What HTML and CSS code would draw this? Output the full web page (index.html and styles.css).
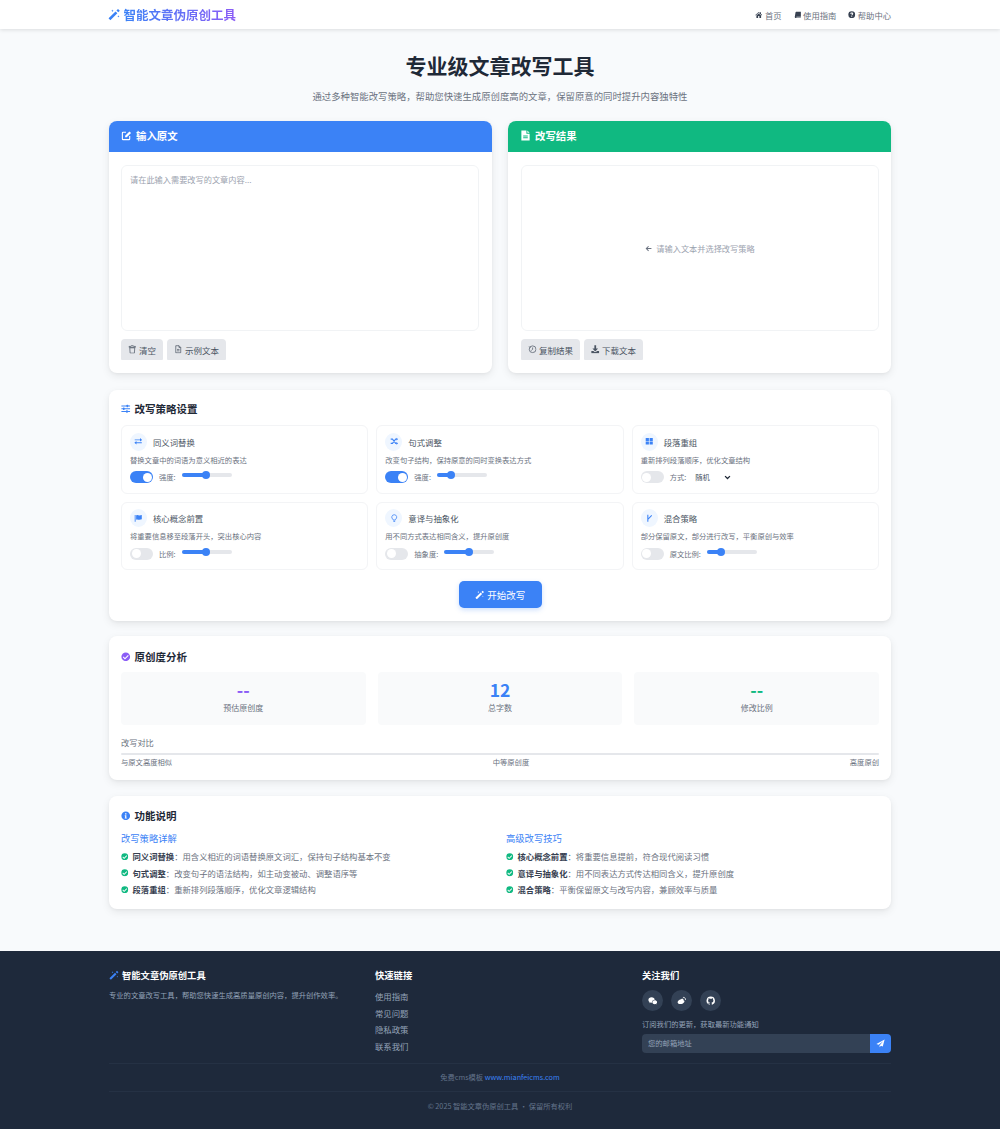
FILE: index.html
```html
<!DOCTYPE html>
<html lang="zh-CN">
<head>
<meta charset="utf-8">
<title>智能文章伪原创工具</title>
<link rel="stylesheet" href="styles.css">
</head>
<body>
<svg class="defs" width="0" height="0" aria-hidden="true">
  <symbol id="i-wand" viewBox="0 0 24 24"><path d="M1 19.500 14.500 6.500 18 10 4.500 23.500zM16.200 4.800l3-3 3.500 3.500-3 3zM8.500 3l.7 1.600 1.600.7-1.600.7-.7 1.600-.7-1.600-1.600-.7 1.600-.7zM20 14l.6 1.500 1.500.6-1.500.6-.6 1.500-.6-1.500-1.500-.6 1.500-.6z" fill="currentColor"/></symbol>
  <symbol id="i-home" viewBox="0 0 24 24"><path d="M12 3 1 12.500l1.300 1.500L12 5.700l9.700 8.300 1.300-1.500-4-3.400V4h-3v2.600zM4.500 14.300V22h5.500v-6h4v6h5.500v-7.700L12 8z" fill="currentColor"/></symbol>
  <symbol id="i-book" viewBox="0 0 24 24"><path d="M7 2h15v16H8a2 2 0 0 0 0 3h14v1.500H6A4 4 0 0 1 2.500 18L5 4a2.500 2.500 0 0 1 2-2z" fill="currentColor"/></symbol>
  <symbol id="i-help" viewBox="0 0 24 24"><path fill-rule="evenodd" d="M12 1a11 11 0 1 1 0 22 11 11 0 0 1 0-22zm-1.500 15.500v3h3v-3zM12 5c-2.800 0-4.500 1.600-4.700 4l2.700.5c.1-1.100.8-1.900 2-1.900 1.100 0 1.800.6 1.800 1.500 0 1.800-3.300 2-3.300 5.400h2.900c0-2.300 3.400-2.500 3.400-5.600C16.800 6.500 14.800 5 12 5z" fill="currentColor"/></symbol>
  <symbol id="i-edit" viewBox="0 0 24 24"><path d="M11 5H4.500A1.500 1.500 0 0 0 3 6.500v13A1.500 1.500 0 0 0 4.500 21h13a1.500 1.500 0 0 0 1.500-1.500V13" fill="none" stroke="currentColor" stroke-width="2.400"/><path d="M9 12.500 18.500 3 22 6.500 12.500 16H9z" fill="currentColor"/></symbol>
  <symbol id="i-file" viewBox="0 0 24 24"><path fill-rule="evenodd" d="M3 1h11v7h7v15H3zM16 1l5 5h-5zM7 12v2h10v-2zm0 4v2h10v-2z" fill="currentColor"/></symbol>
  <symbol id="i-file-o" viewBox="0 0 24 24"><path d="M14 2H5v20h14V7zM14 2v5h5M8.500 12.500h7M8.500 16.500h7" fill="none" stroke="currentColor" stroke-width="2"/></symbol>
  <symbol id="i-trash" viewBox="0 0 24 24"><path d="M9 2h6l1 2h5v2.500H3V4h5zM5 8h14l-1 15H6z" fill="none" stroke="currentColor" stroke-width="2"/></symbol>
  <symbol id="i-copy" viewBox="0 0 24 24"><circle cx="13" cy="12" r="9.500" fill="none" stroke="currentColor" stroke-width="2"/><path d="M7 8 3 4M13 7v5l-4 4" fill="none" stroke="currentColor" stroke-width="2"/></symbol>
  <symbol id="i-download" viewBox="0 0 24 24"><path d="M9.500 1h5v9H20l-8 8-8-8h5.500zM1 17h6l3 3h4l3-3h6v6H1z" fill="currentColor"/></symbol>
  <symbol id="i-arrow" viewBox="0 0 24 24"><path d="M11 3 2 12l9 9 2.500-2.500L8.500 14H22v-4H8.500l5-4.500z" fill="currentColor"/></symbol>
  <symbol id="i-sliders" viewBox="0 0 24 24"><path d="M1 5h22M1 12h22M1 19h22" stroke="currentColor" stroke-width="2.600"/><rect x="14" y="2" width="4" height="6" rx="1" fill="currentColor"/><rect x="5" y="9" width="4" height="6" rx="1" fill="currentColor"/><rect x="13" y="16" width="4" height="6" rx="1" fill="currentColor"/></symbol>
  <symbol id="i-exchange" viewBox="0 0 24 24"><path d="M2 7h15V3l6 5.500L17 13V9.500H2zM22 14.500H7V11l-6 5.500L7 21v-3.500h15z" fill="currentColor"/></symbol>
  <symbol id="i-random" viewBox="0 0 24 24"><path d="M2 6h5l9 12h3M2 18h5l9-12h3" fill="none" stroke="currentColor" stroke-width="3"/><path d="M18 2l5 4-5 4zM18 14l5 4-5 4z" fill="currentColor"/></symbol>
  <symbol id="i-grid" viewBox="0 0 24 24"><path d="M2 3h9v8H2zM13 3h9v8h-9zM2 13h9v8H2zM13 13h9v8h-9z" fill="currentColor"/></symbol>
  <symbol id="i-flag" viewBox="0 0 24 24"><path d="M2 3h2.500v19H2zM6 4c4-2 6 0 9 0 3 0 5-1 7-1.500V15c-2 .8-4 1.500-7 1.500-3 0-5-2-9-.5z" fill="currentColor"/></symbol>
  <symbol id="i-bulb" viewBox="0 0 24 24"><path d="M12 2a7 7 0 0 0-4 12.700c.6.600 1 1.300 1 2.300h6c0-1 .4-1.700 1-2.300A7 7 0 0 0 12 2z" fill="none" stroke="currentColor" stroke-width="2.200"/><path d="M9 19h6v1.500L13.500 22h-3L9 20.500z" fill="currentColor"/></symbol>
  <symbol id="i-blend" viewBox="0 0 24 24"><path d="M8 2v20M8 15 19 4" fill="none" stroke="currentColor" stroke-width="3"/></symbol>
  <symbol id="i-check" viewBox="0 0 24 24"><path fill-rule="evenodd" d="M12 1a11 11 0 1 1 0 22 11 11 0 0 1 0-22zm5.500 6.500L10 15l-3.500-3.500-2 2L10 19l9.500-9.500z" fill="currentColor"/></symbol>
  <symbol id="i-info" viewBox="0 0 24 24"><path fill-rule="evenodd" d="M12 1a11 11 0 1 1 0 22 11 11 0 0 1 0-22zm-1.800 4.500v3.600h3.600V5.500zM9.500 11v2h1v4h-1v2h5v-2h-1v-6z" fill="currentColor"/></symbol>
  <symbol id="i-wechat" viewBox="0 0 24 24"><path d="M9 3c4.400 0 8 2.800 8 6.300v.4c-3.900.1-7 2.600-7 5.800 0 .5.100 1 .2 1.400H9c-.9 0-1.700-.1-2.500-.3L3.500 18l.8-2.600C2.300 14.200 1 12 1 9.300 1 5.800 4.600 3 9 3z" fill="currentColor"/><path d="M17 11c3.300 0 6 2.100 6 4.800 0 1.500-.9 2.900-2.200 3.800l.6 2-2.300-1.100c-.7.200-1.400.3-2.100.3-3.300 0-6-2.200-6-5s2.700-4.800 6-4.800z" fill="currentColor"/></symbol>
  <symbol id="i-weibo" viewBox="0 0 24 24"><path d="M10 8c4.500-2.500 7.500-1 6 2.500 3 .8 3.500 3 2 5.300C16 19 12 20.500 8.500 20.500 5 20.500 1.500 19 1.500 15.800 1.500 13 5 9.500 10 8z" fill="currentColor"/><path d="M15 3.500c4-.8 7.500 2.500 6.300 6.800" fill="none" stroke="currentColor" stroke-width="2"/></symbol>
  <symbol id="i-github" viewBox="0 0 24 24"><path fill-rule="evenodd" d="M12 1.500A10.500 10.500 0 0 0 8.700 22c.5.100.7-.2.700-.5v-2c-2.900.6-3.500-1.200-3.500-1.200-.5-1.200-1.200-1.500-1.200-1.500-1-.6.100-.6.100-.6 1 .1 1.600 1.100 1.600 1.100.9 1.600 2.400 1.100 3 .8.100-.7.400-1.100.7-1.400-2.300-.3-4.800-1.200-4.800-5.200 0-1.100.4-2.100 1.100-2.800-.1-.3-.5-1.300.1-2.800 0 0 .9-.3 2.900 1.100a10 10 0 0 1 5.200 0c2-1.400 2.900-1.100 2.900-1.100.6 1.500.2 2.500.1 2.800.7.700 1.100 1.700 1.100 2.800 0 4-2.500 4.900-4.800 5.200.4.300.7 1 .7 1.900v2.900c0 .3.200.6.700.5A10.500 10.500 0 0 0 12 1.500z" fill="currentColor"/></symbol>
  <symbol id="i-plane" viewBox="0 0 24 24"><path d="M23 1 1 13l6 2.500L19 6 9.500 17v5l3.500-4.200 5 2.200z" fill="currentColor"/></symbol>
</svg>

<header class="topbar">
  <div class="wrap topbar-in">
    <a class="brand"><svg class="ic brand-ic"><use href="#i-wand"/></svg><span class="brand-text">智能文章伪原创工具</span></a>
    <nav class="nav">
      <a><svg class="ic"><use href="#i-home"/></svg>首页</a>
      <a><svg class="ic"><use href="#i-book"/></svg>使用指南</a>
      <a><svg class="ic"><use href="#i-help"/></svg>帮助中心</a>
    </nav>
  </div>
</header>

<main class="wrap main">
  <section class="hero">
    <h1>专业级文章改写工具</h1>
    <p>通过多种智能改写策略，帮助您快速生成原创度高的文章，保留原意的同时提升内容独特性</p>
  </section>

  <section class="editors">
    <article class="card editor">
      <h2 class="editor-head blue"><svg class="ic"><use href="#i-edit"/></svg>输入原文</h2>
      <div class="editor-body">
        <div class="textbox"><span class="placeholder">请在此输入需要改写的文章内容...</span></div>
        <div class="btns">
          <button class="btn"><svg class="ic"><use href="#i-trash"/></svg>清空</button>
          <button class="btn"><svg class="ic"><use href="#i-file-o"/></svg>示例文本</button>
        </div>
      </div>
    </article>
    <article class="card editor">
      <h2 class="editor-head green"><svg class="ic"><use href="#i-file"/></svg>改写结果</h2>
      <div class="editor-body">
        <div class="textbox center"><span class="placeholder"><svg class="ic"><use href="#i-arrow"/></svg>请输入文本并选择改写策略</span></div>
        <div class="btns">
          <button class="btn"><svg class="ic"><use href="#i-copy"/></svg>复制结果</button>
          <button class="btn"><svg class="ic"><use href="#i-download"/></svg>下载文本</button>
        </div>
      </div>
    </article>
  </section>

  <section class="card panel strategy">
    <h2 class="panel-title"><svg class="ic blue-t"><use href="#i-sliders"/></svg>改写策略设置</h2>
    <div class="grid3">
      <div class="item">
        <div class="item-head"><span class="badge"><svg class="ic"><use href="#i-exchange"/></svg></span>同义词替换</div>
        <p class="desc">替换文章中的词语为意义相近的表达</p>
        <div class="ctrl"><span class="toggle on"></span><label>强度:</label><span class="range"><i style="width:50%"></i></span></div>
      </div>
      <div class="item">
        <div class="item-head"><span class="badge"><svg class="ic"><use href="#i-random"/></svg></span>句式调整</div>
        <p class="desc">改变句子结构，保持原意的同时变换表达方式</p>
        <div class="ctrl"><span class="toggle on"></span><label>强度:</label><span class="range"><i style="width:30%"></i></span></div>
      </div>
      <div class="item">
        <div class="item-head"><span class="badge"><svg class="ic"><use href="#i-grid"/></svg></span>段落重组</div>
        <p class="desc">重新排列段落顺序，优化文章结构</p>
        <div class="ctrl"><span class="toggle"></span><label>方式:</label><span class="select">随机<svg class="chev" viewBox="0 0 10 10"><path d="M1.500 3 5 6.500 8.500 3" fill="none" stroke="currentColor" stroke-width="1.800"/></svg></span></div>
      </div>
      <div class="item">
        <div class="item-head"><span class="badge"><svg class="ic"><use href="#i-flag"/></svg></span>核心概念前置</div>
        <p class="desc">将重要信息移至段落开头，突出核心内容</p>
        <div class="ctrl"><span class="toggle"></span><label>比例:</label><span class="range"><i style="width:50%"></i></span></div>
      </div>
      <div class="item">
        <div class="item-head"><span class="badge"><svg class="ic"><use href="#i-bulb"/></svg></span>意译与抽象化</div>
        <p class="desc">用不同方式表达相同含义，提升原创度</p>
        <div class="ctrl"><span class="toggle"></span><label>抽象度:</label><span class="range"><i style="width:50%"></i></span></div>
      </div>
      <div class="item">
        <div class="item-head"><span class="badge"><svg class="ic"><use href="#i-blend"/></svg></span>混合策略</div>
        <p class="desc">部分保留原文，部分进行改写，平衡原创与效率</p>
        <div class="ctrl"><span class="toggle"></span><label>原文比例:</label><span class="range"><i style="width:30%"></i></span></div>
      </div>
    </div>
    <div class="go-row"><button class="go"><svg class="ic"><use href="#i-wand"/></svg>开始改写</button></div>
  </section>

  <section class="card panel analysis">
    <h2 class="panel-title"><svg class="ic purple-t"><use href="#i-check"/></svg>原创度分析</h2>
    <div class="stats">
      <div class="stat"><b class="c-purple">--</b><span>预估原创度</span></div>
      <div class="stat"><b class="c-blue">12</b><span>总字数</span></div>
      <div class="stat"><b class="c-green">--</b><span>修改比例</span></div>
    </div>
    <div class="compare-label">改写对比</div>
    <div class="bar"></div>
    <div class="scale"><span>与原文高度相似</span><span>中等原创度</span><span>高度原创</span></div>
  </section>

  <section class="card panel info">
    <h2 class="panel-title"><svg class="ic blue-t"><use href="#i-info"/></svg>功能说明</h2>
    <div class="cols2">
      <div>
        <h3>改写策略详解</h3>
        <ul>
          <li><svg class="ic"><use href="#i-check"/></svg><p><strong>同义词替换</strong>：用含义相近的词语替换原文词汇，保持句子结构基本不变</p></li>
          <li><svg class="ic"><use href="#i-check"/></svg><p><strong>句式调整</strong>：改变句子的语法结构，如主动变被动、调整语序等</p></li>
          <li><svg class="ic"><use href="#i-check"/></svg><p><strong>段落重组</strong>：重新排列段落顺序，优化文章逻辑结构</p></li>
        </ul>
      </div>
      <div>
        <h3>高级改写技巧</h3>
        <ul>
          <li><svg class="ic"><use href="#i-check"/></svg><p><strong>核心概念前置</strong>：将重要信息提前，符合现代阅读习惯</p></li>
          <li><svg class="ic"><use href="#i-check"/></svg><p><strong>意译与抽象化</strong>：用不同表达方式传达相同含义，提升原创度</p></li>
          <li><svg class="ic"><use href="#i-check"/></svg><p><strong>混合策略</strong>：平衡保留原文与改写内容，兼顾效率与质量</p></li>
        </ul>
      </div>
    </div>
  </section>
</main>

<footer class="footer">
  <div class="wrap">
    <div class="foot-cols">
      <div>
        <h4 class="foot-brand"><svg class="ic"><use href="#i-wand"/></svg>智能文章伪原创工具</h4>
        <p class="foot-text">专业的文章改写工具，帮助您快速生成高质量原创内容，提升创作效率。</p>
      </div>
      <div>
        <h4>快速链接</h4>
        <ul class="foot-links"><li>使用指南</li><li>常见问题</li><li>隐私政策</li><li>联系我们</li></ul>
      </div>
      <div>
        <h4>关注我们</h4>
        <div class="socials">
          <span><svg class="ic"><use href="#i-wechat"/></svg></span>
          <span><svg class="ic"><use href="#i-weibo"/></svg></span>
          <span><svg class="ic"><use href="#i-github"/></svg></span>
        </div>
        <p class="foot-text sub">订阅我们的更新，获取最新功能通知</p>
        <div class="subscribe"><span class="email">您的邮箱地址</span><span class="send"><svg class="ic"><use href="#i-plane"/></svg></span></div>
      </div>
    </div>
    <div class="foot-cms">免费cms模板 <a>www.mianfeicms.com</a></div>
    <div class="foot-copy">© 2025 智能文章伪原创工具 · 保留所有权利</div>
  </div>
</footer>
</body>
</html>
```

FILE: styles.css
```css
* { box-sizing: border-box; margin: 0; padding: 0; }
html, body { background: #f8fafc; }
body { font-family: "Noto Sans CJK SC", "Inter", "Liberation Sans", sans-serif; color: #1f2937; width: 1000px; }
.defs { position: absolute; }
.ic { width: 1em; height: 1em; flex: none; display: inline-block; }
.wrap { width: 782px; margin: 0 auto; }

.topbar { height: 29px; background: #fff; box-shadow: 0 1px 4px rgba(0,0,0,.12); }
.topbar-in { height: 29px; display: flex; align-items: center; justify-content: space-between; }
.brand { display: flex; align-items: center; gap: 3px; font-size: 12.5px; font-weight: 700; color: #3b82f6; }
.brand-ic { font-size: 12.5px; margin-left: -1px; }
.brand-text { background: linear-gradient(90deg, #3b82f6, #8b5cf6); -webkit-background-clip: text; background-clip: text; color: transparent; }
.nav { display: flex; gap: 12px; font-size: 8.3px; color: #6b7280; }
.nav a { display: flex; align-items: center; gap: 2px; }
.nav .ic { font-size: 7.5px; color: #374151; }

.main { padding-top: 21px; }
.hero { text-align: center; height: 71px; }
.hero h1 { font-size: 21px; line-height: 30px; font-weight: 700; color: #1f2937; }
.hero p { font-size: 9.4px; line-height: 14px; margin-top: 9px; color: #6b7280; }

.card { background: #fff; border-radius: 8px; box-shadow: 0 3px 8px rgba(0,0,0,.08), 0 1px 3px rgba(0,0,0,.04); }
.editors { display: grid; grid-template-columns: 1fr 1fr; gap: 16px; }
.editor { height: 252px; overflow: hidden; display: flex; flex-direction: column; }
.editor-head { height: 31px; padding: 0 12px 2px; display: flex; align-items: center; gap: 4px; font-size: 10.4px; font-weight: 700; color: #fff; }
.editor-head .ic { font-size: 11px; }
.blue { background: #3b82f6; }
.green { background: #10b981; }
.editor-body { padding: 13px 13px 13px 12px; display: flex; flex-direction: column; flex: 1; }
.editor + .editor .editor-body { padding: 13px 12px 13px 13px; }
.textbox { height: 166px; border: 1px solid #f1f3f5; border-radius: 6px; padding: 7px 8px; }
.textbox.center { display: flex; align-items: center; justify-content: center; }
.placeholder { font-size: 8.2px; line-height: 12px; color: #9ca3af; display: flex; align-items: center; gap: 4px; }
.placeholder .ic { font-size: 7px; color: #6b7280; }
.btns { display: flex; gap: 4px; margin-top: 8px; }
.btn { height: 21px; padding: 0 7px; border: 0; border-radius: 4px 4px 1px 1px; background: #e5e7eb; color: #4b5563; font: inherit; font-size: 8.5px; display: flex; align-items: center; gap: 2.5px; }
.btn .ic { font-size: 8.5px; }

.panel { padding: 12px; margin-top: 17px; }
.panel-title { display: flex; align-items: center; gap: 4px; font-size: 10.5px; line-height: 15px; font-weight: 700; color: #1f2937; }
.panel-title .ic { font-size: 9.5px; }
.blue-t { color: #3b82f6; }
.purple-t { color: #8b5cf6; }

.strategy { height: 231px; padding-top: 11px; }
.grid3 { display: grid; grid-template-columns: repeat(3, 1fr); gap: 8px; margin-top: 9px; }
.item { height: 68.5px; border: 1px solid #f3f4f6; border-radius: 6px; padding: 6.5px 8px; }
.item-head { display: flex; align-items: center; gap: 6px; font-size: 8.4px; line-height: 18px; color: #4b5563; }
.badge { width: 17px; height: 18px; border-radius: 50%; background: #eff6ff; color: #3b82f6; display: flex; align-items: center; justify-content: center; font-size: 8.5px; }
.desc { font-size: 7.3px; line-height: 11px; color: #6b7280; margin-top: 4px; }
.ctrl { display: flex; align-items: center; gap: 6px; margin-top: 5px; font-size: 7.3px; color: #6b7280; height: 13px; }
.toggle { width: 23px; height: 12px; border-radius: 6px; background: #e5e7eb; position: relative; flex: none; }
.toggle::after { content: ""; position: absolute; left: 1.5px; top: 1.5px; width: 9px; height: 9px; border-radius: 50%; background: #fff; }
.toggle.on { background: #3b82f6; }
.toggle.on::after { left: 12.5px; }
.range { width: 50px; height: 4px; border-radius: 2px; background: #e5e7eb; margin-bottom: 4px; display: block; }
.range i { display: block; height: 4px; border-radius: 2px; background: #3b82f6; position: relative; }
.range i::after { content: ""; position: absolute; right: -3.5px; top: -2px; width: 8px; height: 8px; border-radius: 50%; background: #3b82f6; }
.select { display: flex; align-items: center; gap: 14px; margin-left: 3px; color: #4b5563; }
.chev { width: 7px; height: 7px; color: #1f2937; }
.go-row { display: flex; justify-content: center; margin-top: 11px; }
.go { width: 83px; height: 27px; border: 0; border-radius: 5px; background: #3b82f6; color: #fff; font: inherit; font-size: 9.5px; display: flex; align-items: center; justify-content: center; gap: 3px; box-shadow: 0 2px 5px rgba(59,130,246,.25); }
.go .ic { font-size: 9.5px; }

.analysis { height: 144px; margin-top: 15px; padding-top: 13px; }
.stats { display: grid; grid-template-columns: repeat(3, 1fr); gap: 12px; margin-top: 8px; }
.stat { height: 53px; background: #f9fafb; border-radius: 4px; display: flex; flex-direction: column; align-items: center; padding-top: 8px; }
.stat b { font-size: 17.5px; line-height: 20px; font-weight: 700; }
.stat span { font-size: 8px; line-height: 12px; margin-top: 2px; color: #6b7280; }
.c-purple { color: #8b5cf6; }
.c-blue { color: #3b82f6; }
.c-green { color: #10b981; }
.compare-label { font-size: 8.2px; line-height: 12px; color: #6b7280; margin-top: 11px; }
.bar { height: 2px; background: #e5e7eb; margin-top: 5px; border-radius: 1px; }
.scale { display: flex; justify-content: space-between; font-size: 7.3px; line-height: 11px; color: #6b7280; margin-top: 2px; }

.info { height: 113px; margin-top: 16px; }
.cols2 { display: grid; grid-template-columns: 1fr 1fr; gap: 0 12px; margin-top: 9px; }
.info h3 { font-size: 9.3px; line-height: 13px; font-weight: 400; color: #3b82f6; margin-bottom: 3px; }
.info ul { list-style: none; }
.info li { display: flex; align-items: center; gap: 4px; height: 16.5px; font-size: 8.34px; color: #6b7280; }
.info li .ic { font-size: 7.5px; color: #10b981; }
.info strong { color: #374151; font-weight: 700; }

.footer { background: #1e293b; margin-top: 42px; height: 178px; color: #94a3b8; padding-top: 17px; }
.foot-cols { display: grid; grid-template-columns: 266px 267px 1fr; height: 95px; }
.footer h4 { font-size: 9.3px; line-height: 14px; font-weight: 700; color: #fff; display: flex; align-items: center; gap: 3px; }
.foot-brand .ic { color: #3b82f6; font-size: 10px; }
.foot-text { font-size: 7.3px; line-height: 11px; margin-top: 8px; color: #94a3b8; }
.foot-links { list-style: none; margin-top: 6px; font-size: 8.4px; }
.foot-links li { height: 16.5px; line-height: 16.5px; }
.socials { display: flex; gap: 8px; margin-top: 8px; }
.socials span { width: 21px; height: 21px; border-radius: 50%; background: #334155; color: #fff; display: flex; align-items: center; justify-content: center; font-size: 9.5px; }
.foot-text.sub { margin-top: 8px; }
.subscribe { display: flex; height: 19px; margin-top: 4px; }
.email { flex: 1; background: #334155; border-radius: 4px 0 0 4px; font-size: 7.3px; line-height: 19px; padding-left: 6px; color: #94a3b8; }
.send { width: 21px; background: #3b82f6; color: #fff; border-radius: 0 4px 4px 0; display: flex; align-items: center; justify-content: center; font-size: 9px; }
.foot-cms { border-top: 1px solid #253144; border-bottom: 1px solid #253144; height: 29px; line-height: 27px; text-align: center; font-size: 7.25px; color: #64748b; }
.foot-cms a { color: #3b82f6; }
.foot-copy { text-align: center; font-size: 7.25px; line-height: 12px; margin-top: 8px; color: #64748b; }
```
